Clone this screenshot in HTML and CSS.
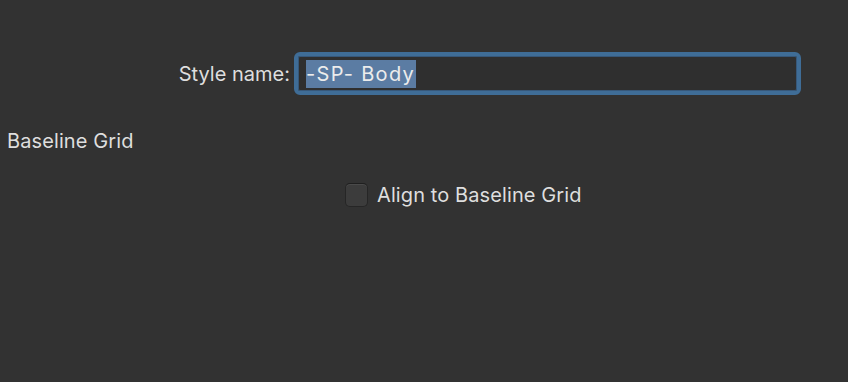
FILE: index.html
```html
<!DOCTYPE html>
<html>
<head>
  <title>Paragraph Style</title>
  <link rel="stylesheet" href="styles.css">
</head>
<body>
  <div class="name-row">
    <label class="name-label" for="styleName">Style name:</label>
    <div class="name-field" id="styleName"><span class="selected">-SP- Body</span></div>
  </div>

  <h3 class="section-title">Baseline Grid</h3>

  <div class="check-row">
    <span class="checkbox"></span>
    <span class="check-label">Align to Baseline Grid</span>
  </div>
</body>
</html>
```

FILE: styles.css
```css
body {
  margin: 0;
  background: #323232;
  color: #dedede;
  font-family: Inter, "Liberation Sans", Arial, sans-serif;
  font-size: 20px;
  letter-spacing: 0.1px;
}
.name-row {
  display: flex;
  align-items: center;
  margin-top: 52px;
}
.name-label {
  width: 294px;
  padding-right: 4px;
  box-sizing: border-box;
  text-align: right;
  letter-spacing: 0;
}
.name-field {
  width: 507px;
  height: 43px;
  box-sizing: border-box;
  border: 4px solid #3f6d97;
  border-radius: 6px;
  box-shadow: inset 0 0 0 1px #37587a;
  background: #2f2f2f;
  padding: 4px 0 0 8px;
  color: #ececec;
}
.selected {
  display: inline-block;
  background: #5b7ca3;
  line-height: 28px;
  letter-spacing: 1.3px;
  padding-right: 1px;
}
.section-title {
  margin: 34px 0 0 7px;
  font-size: 20px;
  font-weight: normal;
}
.check-row {
  display: flex;
  align-items: center;
  gap: 9px;
  margin: 30px 0 0 345px;
}
.checkbox {
  width: 23px;
  height: 24px;
  box-sizing: border-box;
  border: 1px solid #262626;
  border-top-color: #1f1f1f;
  border-radius: 5px;
  background: #3c3c3c;
  box-shadow: inset 0 1px 0 #4a4a4a;
}
```
